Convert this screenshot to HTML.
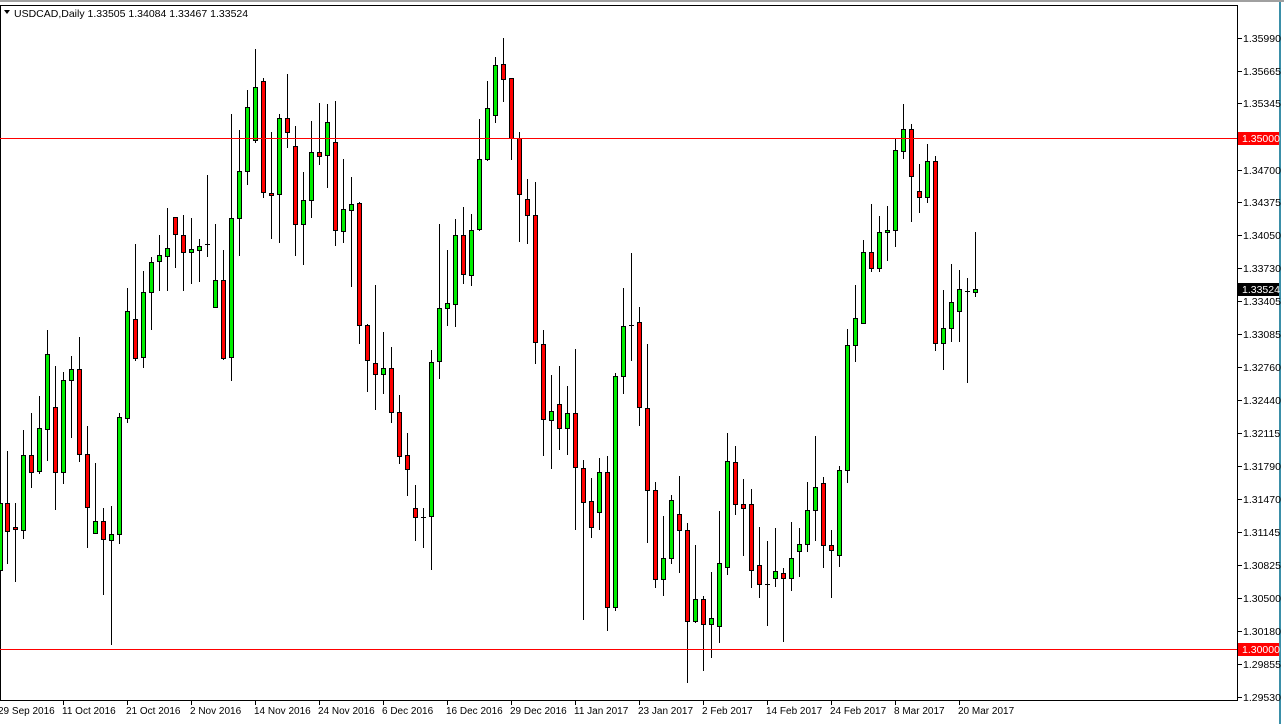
<!DOCTYPE html>
<html><head><meta charset="utf-8">
<style>
html,body{margin:0;padding:0;background:#fff;width:1284px;height:724px;overflow:hidden}
svg{display:block}
text{font-family:"Liberation Sans",sans-serif;font-size:10.5px;fill:#000}
text.d{font-size:10px}
</style></head><body>
<svg id="s" width="1284" height="724" xmlns="http://www.w3.org/2000/svg">
<rect x="0" y="0" width="1284" height="724" fill="#fff"/>
<rect x="0" y="0" width="1284" height="2" fill="#a0a0a0"/>
<rect x="1279" y="2" width="2" height="722" fill="#3a8fa8"/>
<rect x="0.5" y="5.5" width="1237" height="695" fill="none" stroke="#000" stroke-width="1"/>
<g id="c"></g>
<line x1="0" y1="138.5" x2="1237" y2="138.5" stroke="#ff0000" stroke-width="1"/>
<line x1="0" y1="649.5" x2="1237" y2="649.5" stroke="#ff0000" stroke-width="1"/>
<g id="ax"></g>
<polygon points="4,10 10,10 7,14" fill="#000"/>
<text x="14" y="17">USDCAD,Daily  1.33505 1.34084 1.33467 1.33524</text>
</svg>
<script>
var NS="http://www.w3.org/2000/svg";
function el(p,t,a,tx){var e=document.createElementNS(NS,t);for(var k in a)e.setAttribute(k,a[k]);if(tx)e.textContent=tx;p.appendChild(e);return e;}
var z1=[[0,1160,1323,1160,1323,'g'],[22,1160,1228,1032,1305,'r'],[46,1218,1223,1160,1350,'r'],[70,1042,1226,980,1245,'g'],[94,1042,1083,938,1120,'r'],[118,976,1082,897,1085,'g'],[142,795,978,735,1055,'g'],[166,925,1083,823,1173,'r'],[190,858,1083,838,1110,'g'],[214,832,858,799,998,'g'],[238,832,1040,752,1057,'r'],[262,1040,1169,970,1266,'r'],[286,1204,1233,1061,1233,'g'],[310,1204,1247,1171,1383,'r'],[334,1236,1250,1166,1505,'g'],[358,949,1236,938,1256,'g'],[382,689,951,632,962,'g'],[406,709,805,524,808,'r'],[430,643,802,590,825,'g'],[454,569,642,556,734,'g'],[478,552,567,502,638,'g'],[502,535,555,436,638,'g'],[526,459,501,459,582,'r'],[550,503,545,453,638,'r'],[574,538,545,461,621,'g'],[598,530,540,513,616,'g'],[622,525,525,355,555,'d'],[646,613,680,475,680,'g'],[670,613,803,541,806,'r'],[694,462,802,206,858,'g'],[718,346,462,245,553,'g'],[742,189,346,149,378,'g']];
var z2=[[46,140,270,47,275,'g'],[70,125,397,118,410,'r'],[94,400,405,252,510,'r'],[118,217,402,207,521,'g'],[142,217,250,108,288,'r'],[166,285,476,236,553,'r'],[190,417,476,350,575,'g'],[214,300,417,225,460,'g'],[238,300,309,180,330,'r'],[262,226,307,182,386,'g'],[286,275,490,175,528,'r'],[310,440,493,317,521,'g'],[334,427,441,360,629,'g'],[358,425,723,422,768,'r'],[382,723,809,720,886,'r'],[406,817,843,625,930,'r'],[430,829,843,740,891,'g'],[454,829,936,777,962,'r'],[478,936,1045,894,1060,'r'],[502,1042,1076,987,1140,'r'],[526,1172,1194,1115,1250,'r'],[550,1194,1194,1171,1266,'d'],[574,814,1192,784,1320,'g'],[598,682,811,475,852,'g'],[622,670,682,539,724,'g'],[646,503,672,463,727,'g'],[670,503,598,434,621,'r'],[694,490,601,451,626,'g'],[718,317,489,218,491,'g'],[742,191,317,125,320,'g']];
var z3=[[46,84,202,65,220,'g'],[70,82,117,20,168,'r'],[94,115,258,115,308,'r'],[118,258,390,242,503,'r'],[142,403,440,354,507,'r'],[166,441,744,363,793,'r'],[190,747,925,715,1011,'r'],[214,906,929,822,1044,'g'],[238,890,948,801,997,'r'],[262,911,948,848,1009,'g'],[286,911,1041,760,1187,'r'],[310,1042,1124,1024,1403,'r'],[334,1122,1184,1067,1206,'r'],[358,1053,1148,1018,1187,'g'],[382,1053,1374,1014,1429,'r'],[406,823,1374,817,1381,'g'],[430,704,823,615,864,'g'],[454,703,703,532,785,'d'],[478,695,898,660,940,'r'],[502,901,1096,748,1220,'r'],[526,1096,1307,1076,1327,'r'],[550,1258,1307,1157,1346,'g'],[574,1118,1258,1107,1268,'g'],[598,1153,1191,1062,1291,'r'],[622,1191,1407,1174,1553,'r'],[646,1355,1407,1225,1410,'g'],[670,1355,1414,1347,1524,'r'],[694,1400,1414,1291,1493,'g'],[718,1270,1419,1145,1458,'g'],[742,1027,1279,960,1296,'g']];
var z4=[[46,1006,1118,962,1145,'r'],[70,1120,1131,1052,1256,'r'],[94,1120,1297,1079,1343,'r'],[118,1285,1336,1181,1370,'r'],[142,1335,1335,1219,1447,'d'],[166,1299,1320,1184,1340,'g'],[190,1306,1320,1292,1490,'r'],[214,1266,1320,1168,1351,'g'],[238,1226,1245,1184,1313,'g'],[262,1136,1226,1060,1245,'g'],[286,1074,1136,935,1216,'g'],[310,1063,1231,1046,1289,'r'],[334,1231,1243,1189,1370,'r'],[358,1028,1258,1016,1286,'g'],[382,688,1028,646,1060,'g'],[406,615,688,527,732,'g'],[430,439,631,406,631,'g'],[454,439,480,308,490,'r'],[478,385,480,341,488,'g'],[502,379,385,314,459,'g'],[526,163,379,131,421,'g'],[550,106,166,38,183,'g'],[574,106,233,92,353,'r'],[598,274,288,200,329,'r'],[622,193,288,146,304,'g'],[646,193,685,178,702,'r'],[670,644,685,541,753,'g'],[694,574,644,470,678,'g'],[718,539,596,487,678,'g'],[742,543,543,508,788,'d'],[766,539,545,384,556,'g']];
var g=document.getElementById('c');
function draw(arr,x0,y0,f){arr.forEach(function(c){
 var cx=Math.round(x0+c[0]/3);
 var bt=Math.round(y0+c[1]*f),bb=Math.round(y0+c[2]*f),wt=Math.round(y0+c[3]*f),wb=Math.round(y0+c[4]*f);
 el(g,'rect',{x:cx,y:wt,width:1,height:Math.max(1,wb-wt+1),fill:'#000'});
 if(c[5]=='d'){el(g,'rect',{x:cx-2,y:bt,width:5,height:1,fill:'#000'});return;}
 var h=Math.max(2,bb-bt);
 el(g,'rect',{x:cx-2+0.5,y:bt+0.5,width:4,height:h,fill:c[5]=='g'?'#00ee00':'#ff0000',stroke:'#000','stroke-width':1});
});}
draw(z1,0,29.5,0.4085);
draw(z2,240,29.5,0.4085);
draw(z3,480,30,0.42);
draw(z4,720,90,0.37);
var ax=document.getElementById('ax');
var pl=[['1.35990',38],['1.35665',71],['1.35345',103],['1.34700',170],['1.34375',202],['1.34050',235],['1.33730',268],['1.33405',301],['1.33085',334],['1.32760',367],['1.32440',400],['1.32115',433],['1.31790',466],['1.31470',499],['1.31145',532],['1.30825',565],['1.30500',598],['1.30180',631],['1.29855',664],['1.29530',697]];
pl.forEach(function(p){el(ax,'rect',{x:1238,y:p[1],width:4,height:1,fill:'#000'});el(ax,'text',{x:1243,y:p[1]+4},p[0]);});
function box(t,y,bg){el(ax,'rect',{x:1238,y:y-6,width:41,height:13,fill:bg});el(ax,'text',{x:1242,y:y+4,style:'fill:#fff'},t);}
box('1.35000',138,'#ff0000');box('1.30000',649,'#ff0000');box('1.33524',289,'#000');
var dl=['29 Sep 2016','11 Oct 2016','21 Oct 2016','2 Nov 2016','14 Nov 2016','24 Nov 2016','6 Dec 2016','16 Dec 2016','29 Dec 2016','11 Jan 2017','23 Jan 2017','2 Feb 2017','14 Feb 2017','24 Feb 2017','8 Mar 2017','20 Mar 2017'];
dl.forEach(function(d,i){var x=-2+64*i;el(ax,'rect',{x:x+1,y:701,width:1,height:4,fill:'#000'});el(ax,'text',{x:x,y:714,'class':'d'},d);});
</script>
</body></html>
